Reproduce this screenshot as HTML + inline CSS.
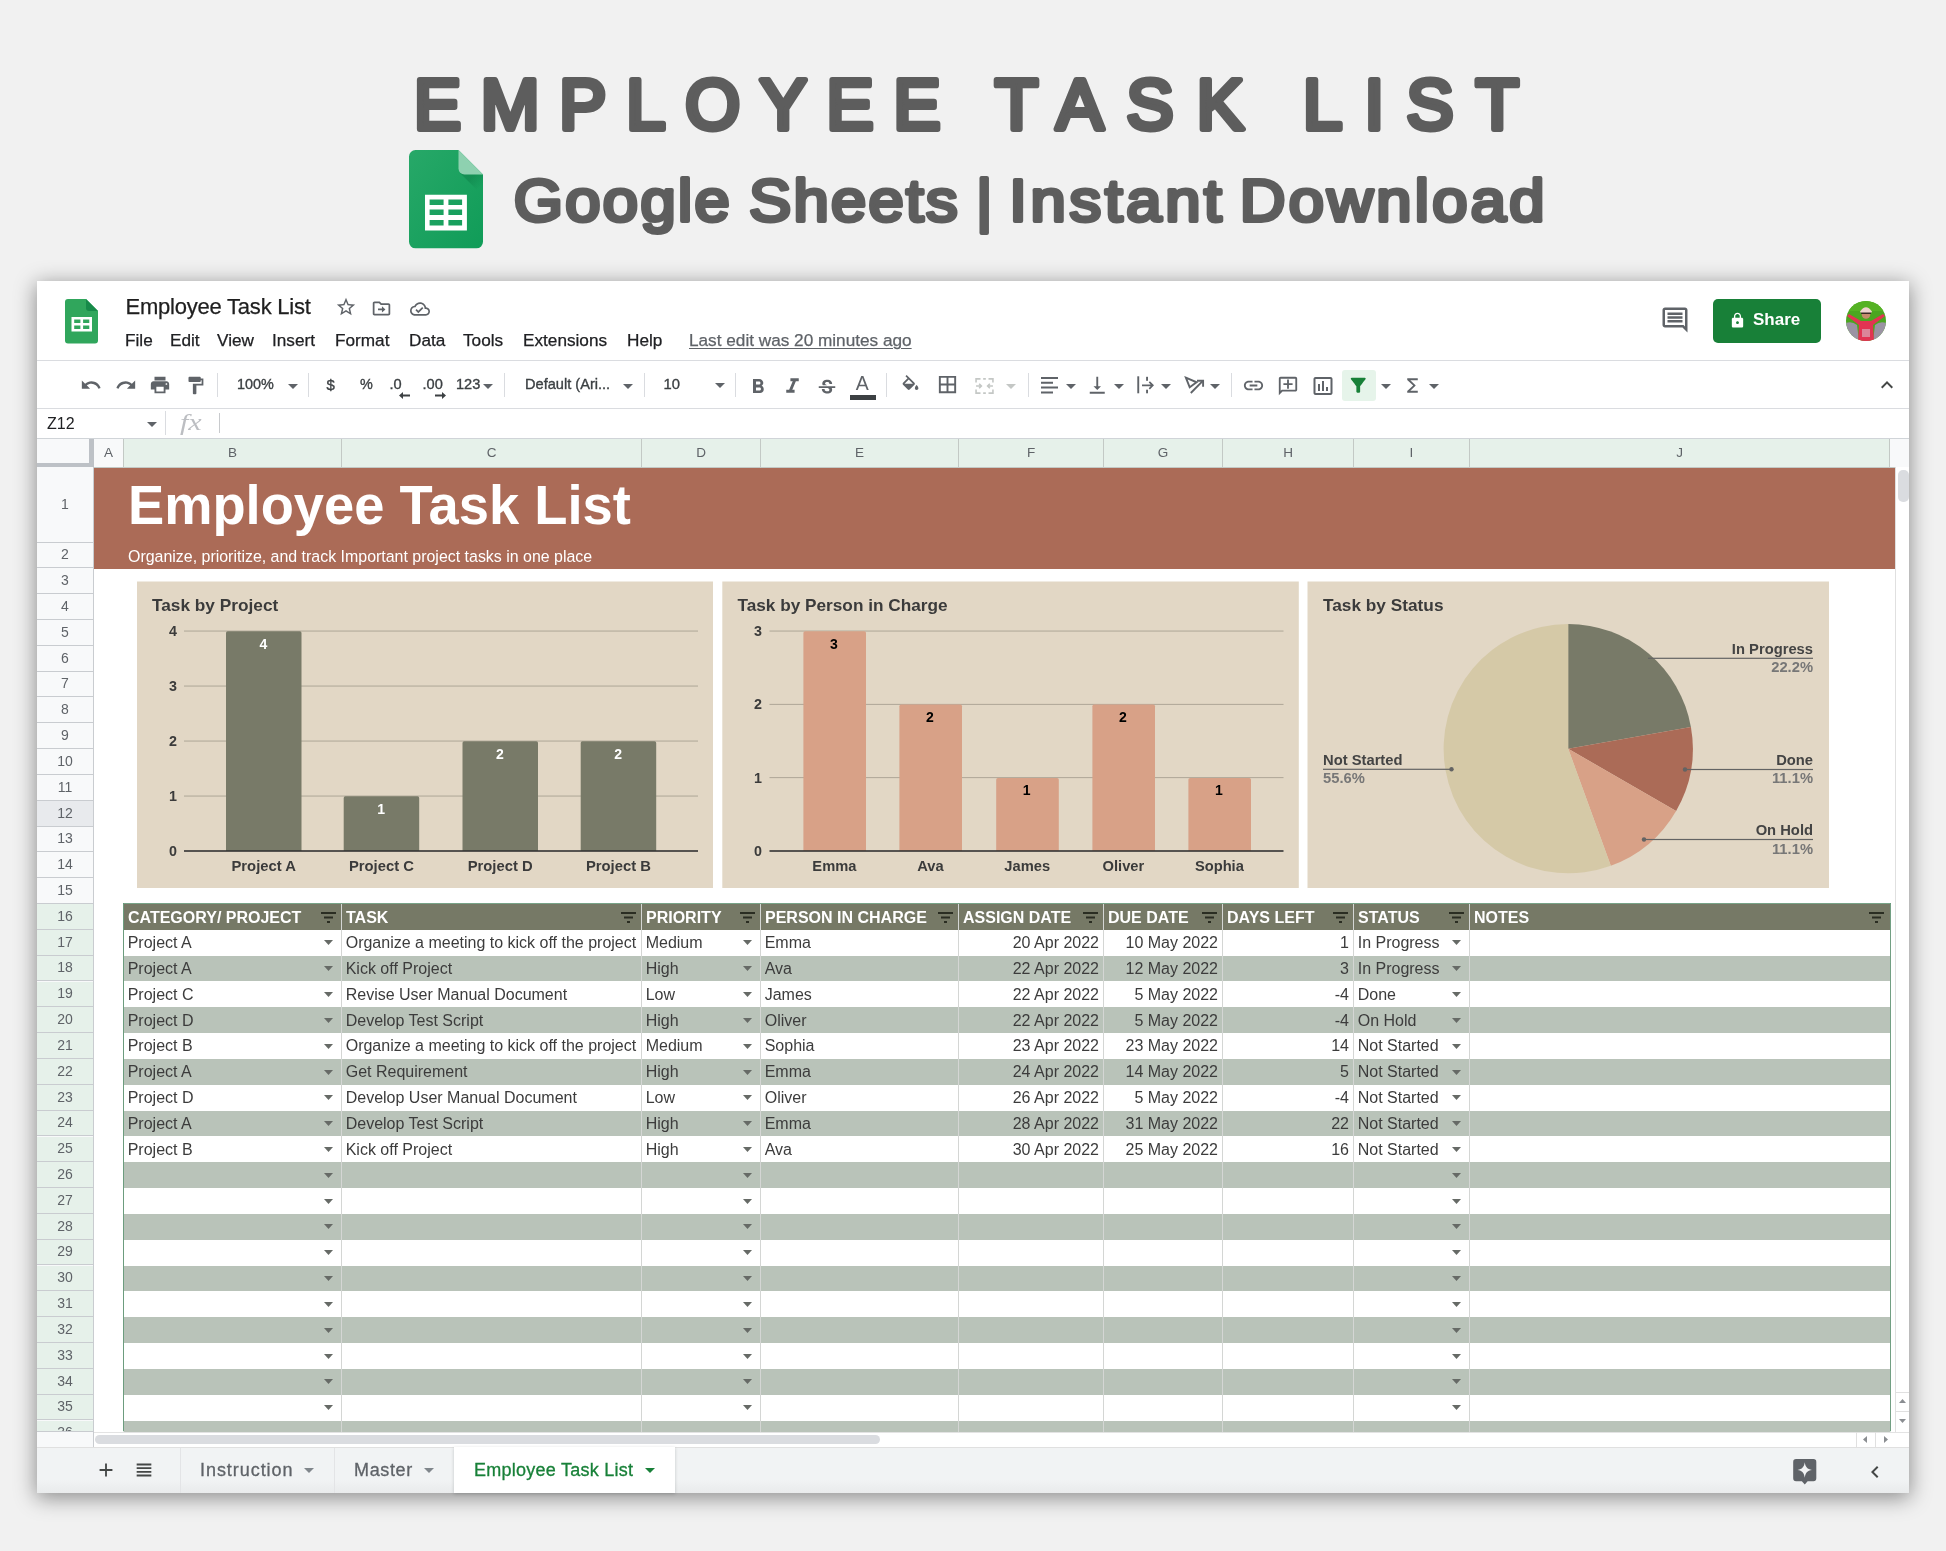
<!DOCTYPE html><html lang="en"><head><meta charset="utf-8"><title>Employee Task List</title><style>
*{box-sizing:border-box;margin:0;padding:0}
html,body{width:1946px;height:1551px;overflow:hidden}
body{will-change:transform;background:#f1f1f1;font-family:"Liberation Sans",sans-serif;position:relative;color:#202124}
.a{position:absolute;white-space:nowrap}
.t{position:absolute;white-space:nowrap;line-height:1}
svg{position:absolute;overflow:visible}
.rh{position:absolute;left:37px;width:56px;text-align:center;font-size:14px;color:#5f6368;background:#f8f9fa;border-bottom:1px solid #c9ccd0;line-height:1}
.ch{position:absolute;top:439px;height:29px;text-align:center;font-size:13.500px;color:#5f6368;background:#e6f1ea;border-right:1px solid #c3c9c5;line-height:28.500px}
.c{position:absolute;white-space:nowrap;font-size:16px;line-height:1;color:#3c3c3c}
.hd{position:absolute;white-space:nowrap;font-size:16px;font-weight:bold;line-height:1;color:#fff}
.m{position:absolute;white-space:nowrap;font-size:17.2px;line-height:1;color:#202124;top:332.300px;-webkit-text-stroke-width:0.25px}
</style></head><body>
<svg style="left:0;top:0" width="1946" height="281" viewBox="0 0 1946 281"><g font-family="Liberation Sans, sans-serif" font-weight="normal" fill="#5d5d5d" stroke="#5d5d5d" stroke-linejoin="round" stroke-linecap="round"><text id="bigtitle" y="128.7" font-size="70.5" stroke-width="5.8"><tspan x="414" style="letter-spacing:19.79px">EMPLOYEE</tspan> <tspan x="995" style="letter-spacing:23.33px">TASK</tspan> <tspan x="1303" style="letter-spacing:22.33px">LIST</tspan></text><g transform="translate(0,221.3) scale(1.08,1)"><text id="subtitle" y="0" font-size="58.6" stroke-width="4"><tspan x="475.65" style="letter-spacing:2.2px">Google</tspan> <tspan x="693.52" style="letter-spacing:2.17px">Sheets</tspan> <tspan x="903.7">|</tspan> <tspan x="934.54" style="letter-spacing:3.47px">Instant</tspan> <tspan x="1147.87" style="letter-spacing:3.08px">Download</tspan></text></g></g></svg>
<svg style="left:409px;top:150.400px" width="74" height="98.300" viewBox="0 0 74 98.300">
<defs><linearGradient id="gsg" x1="0" y1="0" x2="1" y2="1"><stop offset="0" stop-color="#27a868"/><stop offset="1" stop-color="#109c58"/></linearGradient>
<linearGradient id="gsf" x1="0.350" y1="0.350" x2="0.750" y2="0.750"><stop offset="0" stop-color="#0c7a45" stop-opacity=".45"/><stop offset="1" stop-color="#0c7a45" stop-opacity="0"/></linearGradient></defs>
<path d="M6.500 0H49.500L74 24.500V91.800a6.500 6.500 0 0 1-6.500 6.500H6.500a6.500 6.500 0 0 1-6.500-6.500V6.500a6.500 6.500 0 0 1 6.500-6.500z" fill="url(#gsg)"/>
<path d="M51 23L74 46V24.500z" fill="url(#gsf)"/>
<path d="M49.500 0L74 24.500H55.500a6 6 0 0 1-6-6z" fill="#8ed1b0"/>
<path d="M16 44.700H57.900V80.500H16zM20.600 49.500V55H34.600V49.500zM39.400 49.500V55H53.100V49.500zM20.600 59.600V64.900H34.600V59.600zM39.400 59.600V64.900H53.100V59.600zM20.600 70V75.400H34.600V70zM39.400 70V75.400H53.100V70z" fill="#fff" fill-rule="evenodd"/>
</svg>
<div class="a" id="win" style="left:37px;top:281px;width:1872px;height:1212px;background:#fff;box-shadow:0 4px 20px 1px rgba(0,0,0,.42)"></div>
<svg style="left:65px;top:298.5px" width="33" height="44.5" viewBox="0 0 33 44.5">
<path d="M3 0H21L33 12V41.5a3 3 0 0 1-3 3H3a3 3 0 0 1-3-3V3a3 3 0 0 1 3-3z" fill="#30a65c"/>
<path d="M21 0L33 12H24a3 3 0 0 1-3-3z" fill="#178a49"/>
<path d="M6.500 18H27V32.500H6.500zM9.200 20.600V23.900H15.400V20.600zM18.100 20.600V23.900H24.300V20.600zM9.200 26.500V29.900H15.400V26.500zM18.100 26.500V29.900H24.300V26.500z" fill="#fff" fill-rule="evenodd"/>
</svg>
<div class="t" style="left:125.500px;top:296.400px;font-size:22px;letter-spacing:-0.22px;color:#1f1f1f;-webkit-text-stroke:0.25px #1f1f1f">Employee Task List</div>
<svg style="left:334.5px;top:296px" width="22" height="22" viewBox="0 0 24 24"><path d="M22 9.24l-7.19-.62L12 2 9.19 8.63 2 9.24l5.46 4.73L5.82 21 12 17.27 18.18 21l-1.63-7.03L22 9.24zM12 15.4l-3.76 2.27 1-4.28-3.32-2.88 4.38-.38L12 6.1l1.71 4.04 4.38.38-3.32 2.88 1 4.28L12 15.4z" fill="#5f6368" /></svg>
<svg style="left:371px;top:297.5px" width="21" height="21" viewBox="0 0 24 24"><path d="M20 6h-8l-2-2H4c-1.1 0-1.99.9-1.99 2L2 18c0 1.1.9 2 2 2h16c1.1 0 2-.9 2-2V8c0-1.1-.9-2-2-2zm0 12H4V6h5.17l2 2H20v10zm-7.5-1.5l4-3.5-4-3.5V12H8v2h4.5v2.5z" fill="#5f6368" /></svg>
<svg style="left:410px;top:298.5px" width="20" height="20" viewBox="0 0 24 24"><path d="M19.35 10.04C18.67 6.59 15.64 4 12 4 9.11 4 6.6 5.64 5.35 8.04 2.34 8.36 0 10.91 0 14c0 3.31 2.69 6 6 6h13c2.76 0 5-2.24 5-5 0-2.64-2.05-4.78-4.65-4.96zM19 18H6c-2.21 0-4-1.79-4-4s1.79-4 4-4h.71C7.37 7.69 9.48 6 12 6c3.04 0 5.5 2.46 5.5 5.5v.5H19c1.66 0 3 1.34 3 3s-1.34 3-3 3zm-9-3.82l-2.09-2.09L6.5 13.5 10 17l6.01-6.01-1.41-1.41z" fill="#5f6368" /></svg>
<div class="m" style="left:125px">File</div>
<div class="m" style="left:170px">Edit</div>
<div class="m" style="left:217px">View</div>
<div class="m" style="left:272px">Insert</div>
<div class="m" style="left:335px">Format</div>
<div class="m" style="left:409px">Data</div>
<div class="m" style="left:463px">Tools</div>
<div class="m" style="left:523px">Extensions</div>
<div class="m" style="left:627px">Help</div>
<div class="m" style="left:689px;color:#5f6368;text-decoration:underline;text-decoration-thickness:1px;text-underline-offset:2px">Last edit was 20 minutes ago</div>
<svg style="left:1660px;top:305px" width="30" height="30" viewBox="0 0 24 24"><path d="M21.99 4c0-1.1-.89-2-1.99-2H4c-1.1 0-2 .9-2 2v12c0 1.1.9 2 2 2h14l4 4-.01-18zM20 4v13.17L18.83 16H4V4h16zM6 12h12v2H6zm0-3h12v2H6zm0-3h12v2H6z" fill="#5f6368" /></svg>
<div class="a" style="left:1713px;top:299px;width:108px;height:43.5px;background:#188038;border-radius:5px"></div>
<svg style="left:1728.5px;top:311.5px" width="17" height="17" viewBox="0 0 24 24"><path d="M18 8h-1V6c0-2.76-2.24-5-5-5S7 3.24 7 6v2H6c-1.1 0-2 .9-2 2v10c0 1.1.9 2 2 2h12c1.1 0 2-.9 2-2V10c0-1.1-.9-2-2-2zm-6 9c-1.1 0-2-.9-2-2s.9-2 2-2 2 .9 2 2-.9 2-2 2zm3.1-9H8.9V6c0-1.71 1.39-3.1 3.1-3.1 1.71 0 3.1 1.39 3.1 3.1v2z" fill="#fff" /></svg>
<div class="t" style="left:1753px;top:311.200px;font-size:17px;font-weight:bold;color:#fff">Share</div>
<svg style="left:1846px;top:301px" width="40" height="40" viewBox="0 0 40 40">
<defs><clipPath id="av"><circle cx="20" cy="20" r="20"/></clipPath></defs>
<g clip-path="url(#av)"><rect width="40" height="40" fill="#4aa620"/>
<rect y="0" width="40" height="10" fill="#55b224"/>
<path d="M0 22Q6 20 11 24L13 40H0zM40 22Q34 20 29 24L27 40H40z" fill="#9b93a3"/>
<path d="M1 15L3 13L15 20H25L37 13L39 15L27 24L28 40H12L13 24z" fill="#e23452"/>
<path d="M16 28H24V36H16z" fill="#d9a9b8" opacity=".7"/>
<circle cx="20" cy="13.500" r="4.300" fill="#c58b6c"/><path d="M15 13Q15 8 20 8Q25 8 25 13z" fill="#3a2a26"/><path d="M14 10.500Q20 2 26 10.500L25.500 11.500H14.500z" fill="#efd3cf"/>
</g></svg>
<div class="a" style="left:37px;top:360px;width:1872px;height:1px;background:#dadce0"></div>
<svg style="left:79.5px;top:374.0px" width="22" height="22" viewBox="0 0 24 24"><path d="M12.5 8c-2.65 0-5.05.99-6.9 2.6L2 7v9h9l-3.62-3.62c1.39-1.16 3.16-1.88 5.12-1.88 3.54 0 6.55 2.31 7.6 5.5l2.37-.78C21.08 11.03 17.15 8 12.5 8z" fill="#5f6368" /></svg>
<svg style="left:114.5px;top:374.0px" width="22" height="22" viewBox="0 0 24 24"><path d="M18.4 10.6C16.55 8.99 14.15 8 11.5 8c-4.65 0-8.58 3.03-9.96 7.22L3.9 16c1.05-3.19 4.05-5.5 7.6-5.5 1.95 0 3.73.72 5.12 1.88L13 16h9V7l-3.6 3.6z" fill="#5f6368" /></svg>
<svg style="left:149.0px;top:374.0px" width="22" height="22" viewBox="0 0 24 24"><path d="M19 8H5c-1.66 0-3 1.34-3 3v6h4v4h12v-4h4v-6c0-1.66-1.34-3-3-3zm-3 11H8v-5h8v5zm3-7c-.55 0-1-.45-1-1s.45-1 1-1 1 .45 1 1-.45 1-1 1zm-1-9H6v4h12V3z" fill="#5f6368" /></svg>
<svg style="left:184.5px;top:375.0px" width="21" height="21" viewBox="0 0 24 24"><path d="M18 4V3c0-.55-.45-1-1-1H5c-.55 0-1 .45-1 1v4c0 .55.45 1 1 1h12c.55 0 1-.45 1-1V6h1v4H9v11c0 .55.45 1 1 1h2c.55 0 1-.45 1-1v-9h8V4h-3z" fill="#5f6368" /></svg>
<div class="a" style="left:217px;top:373px;width:1px;height:24px;background:#dadce0"></div>
<div class="t" style="left:237px;top:377.148px;font-size:14.4px;color:#3c4043;font-weight:normal;-webkit-text-stroke:0.35px #3c4043">100%</div>
<svg style="left:288.0px;top:383.5px" width="10" height="5" viewBox="0 0 10 5"><path d="M0 0H10L5 5z" fill="#5f6368"/></svg>
<div class="a" style="left:308px;top:373px;width:1px;height:24px;background:#dadce0"></div>
<div class="t" style="left:326.5px;top:376.8px;font-size:15px;color:#3c4043;font-weight:normal;-webkit-text-stroke:0.35px #3c4043">$</div>
<div class="t" style="left:360px;top:377.148px;font-size:14.4px;color:#3c4043;font-weight:normal;-webkit-text-stroke:0.35px #3c4043">%</div>
<div class="t" style="left:389.5px;top:377.032px;font-size:14.6px;color:#3c4043;font-weight:normal;-webkit-text-stroke:0.35px #3c4043">.0</div>
<div class="t" style="left:422.5px;top:377.032px;font-size:14.6px;color:#3c4043;font-weight:normal;-webkit-text-stroke:0.35px #3c4043">.00</div>
<div class="t" style="left:456px;top:377.032px;font-size:14.6px;color:#3c4043;font-weight:normal;-webkit-text-stroke:0.35px #3c4043">123</div>
<svg style="left:483.0px;top:383.5px" width="10" height="5" viewBox="0 0 10 5"><path d="M0 0H10L5 5z" fill="#5f6368"/></svg>
<svg style="left:398.500px;top:392px" width="11" height="7" viewBox="0 0 11 7"><path d="M11 2.600H4V0L0 3.500 4 7V4.400H11z" fill="#3c4043"/></svg>
<svg style="left:435px;top:392px" width="11" height="7" viewBox="0 0 11 7"><path d="M0 2.600H7V0L11 3.500 7 7V4.400H0z" fill="#3c4043"/></svg>
<div class="a" style="left:504px;top:373px;width:1px;height:24px;background:#dadce0"></div>
<div class="t" style="left:525px;top:377.032px;font-size:14.6px;color:#3c4043;font-weight:normal;-webkit-text-stroke:0.35px #3c4043">Default (Ari...</div>
<svg style="left:623.0px;top:383.5px" width="10" height="5" viewBox="0 0 10 5"><path d="M0 0H10L5 5z" fill="#5f6368"/></svg>
<div class="a" style="left:644px;top:373px;width:1px;height:24px;background:#dadce0"></div>
<div class="t" style="left:663.5px;top:376.916px;font-size:14.8px;color:#3c4043;font-weight:normal;-webkit-text-stroke:0.35px #3c4043">10</div>
<svg style="left:715.0px;top:383.0px" width="10" height="5" viewBox="0 0 10 5"><path d="M0 0H10L5 5z" fill="#5f6368"/></svg>
<div class="a" style="left:735px;top:373px;width:1px;height:24px;background:#dadce0"></div>
<svg style="left:745.5px;top:374.8px" width="24" height="24" viewBox="0 0 24 24"><path d="M15.6 10.79c.97-.67 1.65-1.77 1.65-2.79 0-2.26-1.75-4-4-4H7v14h7.04c2.09 0 3.71-1.7 3.71-3.79 0-1.52-.86-2.82-2.15-3.42zM10 6.5h3c.83 0 1.5.67 1.5 1.5s-.67 1.5-1.5 1.5h-3v-3zm3.500 9H10v-3h3.500c.83 0 1.500.67 1.500 1.500s-.67 1.500-1.500 1.500z" fill="#5f6368" /></svg>
<svg style="left:780.0px;top:374.0px" width="25" height="25" viewBox="0 0 24 24"><path d="M10 4v3h2.21l-3.42 8H6v3h8v-3h-2.21l3.42-8H18V4z" fill="#5f6368" /></svg>
<svg style="left:816.0px;top:376.5px" width="22" height="22" viewBox="0 0 24 24"><path d="M7.24 8.75c-.26-.48-.39-1.03-.39-1.67 0-.61.13-1.16.4-1.67.26-.5.63-.93 1.11-1.29.48-.35 1.05-.63 1.7-.83.66-.19 1.39-.29 2.18-.29.81 0 1.54.11 2.21.34.66.22 1.23.54 1.69.94.47.4.83.88 1.08 1.43.25.55.38 1.15.38 1.81h-3.010c0-.31-.05-.59-.15-.85-.09-.27-.24-.49-.44-.68-.2-.19-.45-.33-.75-.44-.3-.1-.66-.16-1.060-.16-.39 0-.74.04-1.030.13-.29.09-.53.21-.72.36-.19.16-.34.34-.44.55-.1.21-.15.43-.15.66 0 .48.25.88.74 1.210.38.25.77.48 1.410.7H7.390c-.05-.08-.11-.17-.15-.25zM21 12v-2H3v2h9.620c.18.07.4.14.55.2.37.17.66.34.87.51.21.17.35.36.43.57.07.2.11.43.11.69 0 .23-.05.45-.14.66-.09.2-.23.38-.42.53-.19.15-.42.26-.71.35-.29.08-.63.13-1.010.13-.43 0-.83-.04-1.180-.13s-.66-.23-.91-.42c-.25-.19-.45-.44-.59-.75-.14-.31-.25-.76-.25-1.210H6.400c0 .55.08 1.130.24 1.580.16.45.37.85.65 1.210.28.35.6.66.98.92.37.26.78.48 1.220.65.44.17.9.3 1.380.39.48.08.96.13 1.440.13.8 0 1.530-.09 2.180-.28s1.210-.45 1.670-.79c.46-.34.82-.77 1.070-1.270s.38-1.070.38-1.710c0-.6-.1-1.140-.31-1.610-.05-.11-.11-.23-.17-.33H21z" fill="#5f6368" /></svg>
<div class="t" style="left:855.7px;top:373.5px;font-size:19.5px;color:#5f6368;font-weight:normal;-webkit-text-stroke:0px #5f6368">A</div>
<div class="a" style="left:850px;top:395px;width:26px;height:4.500px;background:#3c4043"></div>
<div class="a" style="left:886px;top:373px;width:1px;height:24px;background:#dadce0"></div>
<svg style="left:900.0px;top:374.7px" width="21" height="21" viewBox="0 0 24 24"><path d="M16.56 8.94L7.62 0 6.21 1.41l2.38 2.38-5.15 5.15c-.59.59-.59 1.54 0 2.12l5.5 5.5c.29.29.68.44 1.06.44s.77-.15 1.06-.44l5.5-5.5c.59-.58.59-1.53 0-2.12zM5.21 10L10 5.21 14.79 10H5.21zM19 11.5s-2 2.170-2 3.500c0 1.100.9 2 2 2s2-.9 2-2c0-1.330-2-3.500-2-3.500z" fill="#5f6368" /></svg>
<svg style="left:935.8px;top:373.2px" width="23" height="23" viewBox="0 0 24 24"><path d="M3 3v18h18V3H3zm8 16H5v-6h6v6zm0-8H5V5h6v6zm8 8h-6v-6h6v6zm0-8h-6V5h6v6z" fill="#5f6368" /></svg>
<svg style="left:975px;top:378px" width="19" height="16" viewBox="0 0 21 18"><g fill="none" stroke="#c4c7c5" stroke-width="1.800"><path d="M1 5V1H6M9 1H12M15 1H20V5M1 13V17H6M9 17H12M15 17H20V13"/><path d="M1 9H7M4.500 6.500L7 9 4.500 11.500M20 9H14M16.500 6.500L14 9 16.500 11.500"/></g></svg>
<svg style="left:1006.0px;top:383.5px" width="10" height="5" viewBox="0 0 10 5"><path d="M0 0H10L5 5z" fill="#c4c7c5"/></svg>
<div class="a" style="left:1028px;top:373px;width:1px;height:24px;background:#dadce0"></div>
<svg style="left:1041.300px;top:377px" width="17" height="17" viewBox="0 0 17 17"><path d="M0 0H17V2H0zM0 4.800H12V6.800H0zM0 9.600H17V11.600H0zM0 14.500H12V16.500H0z" fill="#5f6368"/></svg>
<svg style="left:1065.5px;top:383.5px" width="10" height="5" viewBox="0 0 10 5"><path d="M0 0H10L5 5z" fill="#5f6368"/></svg>
<svg style="left:1086.25px;top:373.75px" width="22.5" height="22.5" viewBox="0 0 24 24"><path d="M16 13h-3V3h-2v10H8l4 4 4-4zM4 19v2h16v-2H4z" fill="#5f6368" /></svg>
<svg style="left:1113.5px;top:383.5px" width="10" height="5" viewBox="0 0 10 5"><path d="M0 0H10L5 5z" fill="#5f6368"/></svg>
<svg style="left:1137px;top:376px" width="20" height="18" viewBox="0 0 20 18"><g fill="#5f6368"><rect x="0.300" y="0.300" width="1.900" height="17"/><rect x="9.100" y="0.800" width="1.900" height="4"/><rect x="9.100" y="13.700" width="1.900" height="3.600"/></g><path d="M5 9.300H15.500M12.300 5.800L15.800 9.300 12.300 12.800" fill="none" stroke="#5f6368" stroke-width="1.700"/></svg>
<svg style="left:1161.0px;top:383.5px" width="10" height="5" viewBox="0 0 10 5"><path d="M0 0H10L5 5z" fill="#5f6368"/></svg>
<svg style="left:1184px;top:375px" width="22" height="20" viewBox="0 0 22 20"><g fill="none" stroke="#5f6368" stroke-width="1.900"><path d="M1.900 2.700L12.600 7.300 5.700 12.300z"/><path d="M6.800 18L18.600 6.200"/><path d="M13 5.700H19.100V11.800"/></g></svg>
<svg style="left:1209.5px;top:383.5px" width="10" height="5" viewBox="0 0 10 5"><path d="M0 0H10L5 5z" fill="#5f6368"/></svg>
<div class="a" style="left:1231px;top:373px;width:1px;height:24px;background:#dadce0"></div>
<svg style="left:1242.0px;top:374.0px" width="23" height="23" viewBox="0 0 24 24"><path d="M3.9 12c0-1.710 1.390-3.100 3.100-3.100h4V7H7c-2.760 0-5 2.240-5 5s2.240 5 5 5h4v-1.900H7c-1.710 0-3.100-1.390-3.100-3.100zM8 13h8v-2H8v2zm9-6h-4v1.900h4c1.710 0 3.100 1.390 3.100 3.100s-1.390 3.100-3.100 3.100h-4V17h4c2.760 0 5-2.240 5-5s-2.240-5-5-5z" fill="#5f6368" /></svg>
<svg style="left:1277px;top:374.5px" width="22" height="22" viewBox="0 0 24 24"><path d="M22 4c0-1.100-.9-2-2-2H4c-1.100 0-2 .9-2 2v12c0 1.100.9 2 2 2h14l4 4V4zm-2 13.170L18.830 16H4V4h16v13.170zM13 5h-2v4H7v2h4v4h2v-4h4V9h-4z" fill="#5f6368" transform="translate(24,0) scale(-1,1)"/></svg>
<svg style="left:1310.5px;top:373.5px" width="24" height="24" viewBox="0 0 24 24"><path d="M9 17H7v-7h2v7zm4 0h-2V7h2v10zm4 0h-2v-4h2v4zm2.500 2.100h-15V5h15v14.100zm0-16.100h-15c-1.100 0-2 .9-2 2v14c0 1.100.9 2 2 2h15c1.100 0 2-.9 2-2V5c0-1.100-.9-2-2-2z" fill="#5f6368" /></svg>
<div class="a" style="left:1341.500px;top:370px;width:34px;height:31px;background:#e6f4ea;border-radius:3px"></div>
<svg style="left:1347.25px;top:374.25px" width="22.5" height="22.5" viewBox="0 0 24 24"><path d="M4.250 5.610C6.270 8.200 10 13 10 13v6c0 .55.45 1 1 1h2c.55 0 1-.45 1-1v-6s3.720-4.800 5.740-7.390c.51-.66.04-1.610-.79-1.610H5.040c-.83 0-1.300.95-.79 1.610z" fill="#188038" /></svg>
<svg style="left:1380.5px;top:383.5px" width="10" height="5" viewBox="0 0 10 5"><path d="M0 0H10L5 5z" fill="#5f6368"/></svg>
<svg style="left:1400.5px;top:374.0px" width="23" height="23" viewBox="0 0 24 24"><path d="M17.500 4.500H6.500v1.800l6.200 5.700-6.200 5.700v1.800h11v-2.100H9.700l5.700-5.400-5.700-5.400h7.800z" fill="#5f6368" /></svg>
<svg style="left:1428.5px;top:383.5px" width="10" height="5" viewBox="0 0 10 5"><path d="M0 0H10L5 5z" fill="#5f6368"/></svg>
<svg style="left:1875.0px;top:373.0px" width="24" height="24" viewBox="0 0 24 24"><path d="M12 8l-6 6 1.410 1.410L12 10.830l4.590 4.580L18 14z" fill="#444746" /></svg>
<div class="a" style="left:37px;top:408px;width:1872px;height:1px;background:#dadce0"></div>
<div class="t" style="left:47px;top:415.500px;font-size:16px;color:#202124">Z12</div>
<svg style="left:146.5px;top:422.0px" width="10" height="5" viewBox="0 0 10 5"><path d="M0 0H10L5 5z" fill="#5f6368"/></svg>
<div class="a" style="left:165px;top:411px;width:1px;height:24px;background:#dadce0"></div>
<div class="t" style="left:180px;top:410.500px;font-size:23.500px;font-style:italic;font-family:'Liberation Serif',serif;color:#bcbec2;transform:scaleX(1.28);transform-origin:0 0">fx</div>
<div class="a" style="left:218.500px;top:413px;width:1px;height:20px;background:#c8cacd"></div>
<div class="a" style="left:37px;top:439px;width:57px;height:29px;background:#f8f9fa;border-right:5px solid #bdc1c6;border-bottom:5px solid #bdc1c6"></div>
<div class="ch" style="left:94px;width:30px;background:#f8f9fa">A</div>
<div class="ch" style="left:124px;width:218px;background:#e6f1ea">B</div>
<div class="ch" style="left:342px;width:300px;background:#e6f1ea">C</div>
<div class="ch" style="left:642px;width:119px;background:#e6f1ea">D</div>
<div class="ch" style="left:761px;width:198px;background:#e6f1ea">E</div>
<div class="ch" style="left:959px;width:145px;background:#e6f1ea">F</div>
<div class="ch" style="left:1104px;width:119px;background:#e6f1ea">G</div>
<div class="ch" style="left:1223px;width:131px;background:#e6f1ea">H</div>
<div class="ch" style="left:1354px;width:116px;background:#e6f1ea">I</div>
<div class="ch" style="left:1470px;width:420px;background:#e6f1ea">J</div>
<div class="a" style="left:1890px;top:439px;width:19px;height:28px;background:#f8f9fa"></div>
<div class="a" style="left:37px;top:438px;width:1872px;height:1px;background:#d0d4d8"></div>
<div class="a" style="left:94px;top:467px;width:1801px;height:1px;background:#c3c9c5"></div>
<div class="a" style="left:37px;top:467px;width:57px;height:965px;background:#f8f9fa;border-right:1px solid #c9ccd0"></div>
<div class="rh" style="top:467.0px;height:75.6px;background:#f8f9fa;overflow:hidden"><span style="position:absolute;left:0;width:56px;top:29.7px">1</span></div>
<div class="rh" style="top:542.6px;height:25.8px;background:#f8f9fa;overflow:hidden"><span style="position:absolute;left:0;width:56px;top:4.8px">2</span></div>
<div class="rh" style="top:568.4px;height:25.8px;background:#f8f9fa;overflow:hidden"><span style="position:absolute;left:0;width:56px;top:4.8px">3</span></div>
<div class="rh" style="top:594.2px;height:25.8px;background:#f8f9fa;overflow:hidden"><span style="position:absolute;left:0;width:56px;top:4.8px">4</span></div>
<div class="rh" style="top:620.1px;height:25.8px;background:#f8f9fa;overflow:hidden"><span style="position:absolute;left:0;width:56px;top:4.8px">5</span></div>
<div class="rh" style="top:645.9px;height:25.8px;background:#f8f9fa;overflow:hidden"><span style="position:absolute;left:0;width:56px;top:4.8px">6</span></div>
<div class="rh" style="top:671.7px;height:25.8px;background:#f8f9fa;overflow:hidden"><span style="position:absolute;left:0;width:56px;top:4.8px">7</span></div>
<div class="rh" style="top:697.5px;height:25.8px;background:#f8f9fa;overflow:hidden"><span style="position:absolute;left:0;width:56px;top:4.8px">8</span></div>
<div class="rh" style="top:723.3px;height:25.8px;background:#f8f9fa;overflow:hidden"><span style="position:absolute;left:0;width:56px;top:4.8px">9</span></div>
<div class="rh" style="top:749.2px;height:25.8px;background:#f8f9fa;overflow:hidden"><span style="position:absolute;left:0;width:56px;top:4.8px">10</span></div>
<div class="rh" style="top:775.0px;height:25.8px;background:#f8f9fa;overflow:hidden"><span style="position:absolute;left:0;width:56px;top:4.8px">11</span></div>
<div class="rh" style="top:800.8px;height:25.8px;background:#e8eaed;overflow:hidden"><span style="position:absolute;left:0;width:56px;top:4.8px">12</span></div>
<div class="rh" style="top:826.6px;height:25.8px;background:#f8f9fa;overflow:hidden"><span style="position:absolute;left:0;width:56px;top:4.8px">13</span></div>
<div class="rh" style="top:852.4px;height:25.8px;background:#f8f9fa;overflow:hidden"><span style="position:absolute;left:0;width:56px;top:4.8px">14</span></div>
<div class="rh" style="top:878.3px;height:25.8px;background:#f8f9fa;overflow:hidden"><span style="position:absolute;left:0;width:56px;top:4.8px">15</span></div>
<div class="rh" style="top:904.1px;height:25.8px;background:#e6f1ea;overflow:hidden"><span style="position:absolute;left:0;width:56px;top:4.8px">16</span></div>
<div class="rh" style="top:929.9px;height:25.8px;background:#e6f1ea;overflow:hidden"><span style="position:absolute;left:0;width:56px;top:4.8px">17</span></div>
<div class="rh" style="top:955.7px;height:25.8px;background:#e6f1ea;overflow:hidden"><span style="position:absolute;left:0;width:56px;top:4.8px">18</span></div>
<div class="rh" style="top:981.5px;height:25.8px;background:#e6f1ea;overflow:hidden"><span style="position:absolute;left:0;width:56px;top:4.8px">19</span></div>
<div class="rh" style="top:1007.4px;height:25.8px;background:#e6f1ea;overflow:hidden"><span style="position:absolute;left:0;width:56px;top:4.8px">20</span></div>
<div class="rh" style="top:1033.2px;height:25.8px;background:#e6f1ea;overflow:hidden"><span style="position:absolute;left:0;width:56px;top:4.8px">21</span></div>
<div class="rh" style="top:1059.0px;height:25.8px;background:#e6f1ea;overflow:hidden"><span style="position:absolute;left:0;width:56px;top:4.8px">22</span></div>
<div class="rh" style="top:1084.8px;height:25.8px;background:#e6f1ea;overflow:hidden"><span style="position:absolute;left:0;width:56px;top:4.8px">23</span></div>
<div class="rh" style="top:1110.6px;height:25.8px;background:#e6f1ea;overflow:hidden"><span style="position:absolute;left:0;width:56px;top:4.8px">24</span></div>
<div class="rh" style="top:1136.5px;height:25.8px;background:#e6f1ea;overflow:hidden"><span style="position:absolute;left:0;width:56px;top:4.8px">25</span></div>
<div class="rh" style="top:1162.3px;height:25.8px;background:#e6f1ea;overflow:hidden"><span style="position:absolute;left:0;width:56px;top:4.8px">26</span></div>
<div class="rh" style="top:1188.1px;height:25.8px;background:#e6f1ea;overflow:hidden"><span style="position:absolute;left:0;width:56px;top:4.8px">27</span></div>
<div class="rh" style="top:1213.9px;height:25.8px;background:#e6f1ea;overflow:hidden"><span style="position:absolute;left:0;width:56px;top:4.8px">28</span></div>
<div class="rh" style="top:1239.7px;height:25.8px;background:#e6f1ea;overflow:hidden"><span style="position:absolute;left:0;width:56px;top:4.8px">29</span></div>
<div class="rh" style="top:1265.6px;height:25.8px;background:#e6f1ea;overflow:hidden"><span style="position:absolute;left:0;width:56px;top:4.8px">30</span></div>
<div class="rh" style="top:1291.4px;height:25.8px;background:#e6f1ea;overflow:hidden"><span style="position:absolute;left:0;width:56px;top:4.8px">31</span></div>
<div class="rh" style="top:1317.2px;height:25.8px;background:#e6f1ea;overflow:hidden"><span style="position:absolute;left:0;width:56px;top:4.8px">32</span></div>
<div class="rh" style="top:1343.0px;height:25.8px;background:#e6f1ea;overflow:hidden"><span style="position:absolute;left:0;width:56px;top:4.8px">33</span></div>
<div class="rh" style="top:1368.8px;height:25.8px;background:#e6f1ea;overflow:hidden"><span style="position:absolute;left:0;width:56px;top:4.8px">34</span></div>
<div class="rh" style="top:1394.7px;height:25.8px;background:#e6f1ea;overflow:hidden"><span style="position:absolute;left:0;width:56px;top:4.8px">35</span></div>
<div class="rh" style="top:1420.5px;height:11.5px;background:#e6f1ea;overflow:hidden"><span style="position:absolute;left:0;width:56px;top:4.8px">36</span></div>
<div class="a" style="left:94px;top:467.800px;width:1801px;height:100.800px;background:#ab6b57"></div>
<div class="t" style="left:128px;top:477.300px;font-size:56.400px;font-weight:bold;color:#fff;transform:scaleX(.9625);transform-origin:0 0">Employee Task List</div>
<div class="t" style="left:128px;top:548.700px;font-size:15.950px;color:#fff">Organize, prioritize, and track Important project tasks in one place</div>
<div class="a" style="left:1895px;top:467px;width:14px;height:965px;background:#fff;border-left:1px solid #e0e0e0"></div>
<div class="a" style="left:1898px;top:469.500px;width:10.500px;height:32px;background:#dadce0;border-radius:5px"></div>
<svg style="left:0;top:0" width="1946" height="1551" viewBox="0 0 1946 1551"><rect x="137" y="581.5" width="576" height="306.5" fill="#e2d7c5"/><text x="152" y="611" font-family="Liberation Sans, sans-serif" font-size="17.25" font-weight="bold" fill="#3b3b3b" text-anchor="start">Task by Project</text><rect x="184" y="630.6" width="514" height="0.9" fill="#a8a192"/><text x="177" y="636" font-family="Liberation Sans, sans-serif" font-size="14.3" font-weight="bold" fill="#3b3b3b" text-anchor="end">4</text><rect x="184" y="685.6" width="514" height="0.9" fill="#a8a192"/><text x="177" y="691" font-family="Liberation Sans, sans-serif" font-size="14.3" font-weight="bold" fill="#3b3b3b" text-anchor="end">3</text><rect x="184" y="740.6" width="514" height="0.9" fill="#a8a192"/><text x="177" y="746" font-family="Liberation Sans, sans-serif" font-size="14.3" font-weight="bold" fill="#3b3b3b" text-anchor="end">2</text><rect x="184" y="795.6" width="514" height="0.9" fill="#a8a192"/><text x="177" y="801" font-family="Liberation Sans, sans-serif" font-size="14.3" font-weight="bold" fill="#3b3b3b" text-anchor="end">1</text><text x="177" y="856" font-family="Liberation Sans, sans-serif" font-size="14.3" font-weight="bold" fill="#3b3b3b" text-anchor="end">0</text><path d="M226 851V633Q226 631.3 227.7 631.3H299.8Q301.5 631.3 301.5 633V851z" fill="#787a68"/><text x="263.5" y="648.8" font-family="Liberation Sans, sans-serif" font-size="14" font-weight="bold" fill="#fff" text-anchor="middle">4</text><text x="263.7" y="871" font-family="Liberation Sans, sans-serif" font-size="14.8" font-weight="bold" fill="#3b3b3b" text-anchor="middle">Project A</text><path d="M343.7 851V798Q343.7 796.3 345.4 796.3H417.5Q419.2 796.3 419.2 798V851z" fill="#787a68"/><text x="381.2" y="813.8" font-family="Liberation Sans, sans-serif" font-size="14" font-weight="bold" fill="#fff" text-anchor="middle">1</text><text x="381.4" y="871" font-family="Liberation Sans, sans-serif" font-size="14.8" font-weight="bold" fill="#3b3b3b" text-anchor="middle">Project C</text><path d="M462.5 851V743Q462.5 741.3 464.2 741.3H536.3Q538.0 741.3 538.0 743V851z" fill="#787a68"/><text x="500.0" y="758.8" font-family="Liberation Sans, sans-serif" font-size="14" font-weight="bold" fill="#fff" text-anchor="middle">2</text><text x="500.2" y="871" font-family="Liberation Sans, sans-serif" font-size="14.8" font-weight="bold" fill="#3b3b3b" text-anchor="middle">Project D</text><path d="M580.7 851V743Q580.7 741.3 582.4000000000001 741.3H654.5Q656.2 741.3 656.2 743V851z" fill="#787a68"/><text x="618.2" y="758.8" font-family="Liberation Sans, sans-serif" font-size="14" font-weight="bold" fill="#fff" text-anchor="middle">2</text><text x="618.4000000000001" y="871" font-family="Liberation Sans, sans-serif" font-size="14.8" font-weight="bold" fill="#3b3b3b" text-anchor="middle">Project B</text><rect x="184" y="850.2" width="514" height="1.6" fill="#333"/><rect x="722.3" y="581.5" width="576.5" height="306.5" fill="#e2d7c5"/><text x="737.5" y="611" font-family="Liberation Sans, sans-serif" font-size="17.22" font-weight="bold" fill="#3b3b3b" text-anchor="start">Task by Person in Charge</text><rect x="769.5" y="630.6" width="514" height="0.9" fill="#a8a192"/><text x="762" y="636.0" font-family="Liberation Sans, sans-serif" font-size="14.3" font-weight="bold" fill="#3b3b3b" text-anchor="end">3</text><rect x="769.5" y="703.9" width="514" height="0.9" fill="#a8a192"/><text x="762" y="709.3" font-family="Liberation Sans, sans-serif" font-size="14.3" font-weight="bold" fill="#3b3b3b" text-anchor="end">2</text><rect x="769.5" y="777.2" width="514" height="0.9" fill="#a8a192"/><text x="762" y="782.6" font-family="Liberation Sans, sans-serif" font-size="14.3" font-weight="bold" fill="#3b3b3b" text-anchor="end">1</text><text x="762" y="856" font-family="Liberation Sans, sans-serif" font-size="14.3" font-weight="bold" fill="#3b3b3b" text-anchor="end">0</text><path d="M803.4 851V633.0Q803.4 631.3 805.1 631.3H864.3Q866.0 631.3 866.0 633.0V851z" fill="#d8a187"/><text x="833.8" y="648.81" font-family="Liberation Sans, sans-serif" font-size="14" font-weight="bold" fill="#000" text-anchor="middle">3</text><text x="834.4" y="871" font-family="Liberation Sans, sans-serif" font-size="14.7" font-weight="bold" fill="#3b3b3b" text-anchor="middle">Emma</text><path d="M899.4 851V706.3Q899.4 704.6 901.1 704.6H960.3Q962.0 704.6 962.0 706.3V851z" fill="#d8a187"/><text x="929.8" y="722.14" font-family="Liberation Sans, sans-serif" font-size="14" font-weight="bold" fill="#000" text-anchor="middle">2</text><text x="930.4" y="871" font-family="Liberation Sans, sans-serif" font-size="14.7" font-weight="bold" fill="#3b3b3b" text-anchor="middle">Ava</text><path d="M996.2 851V779.7Q996.2 778.0 997.9000000000001 778.0H1057.1Q1058.8 778.0 1058.8 779.7V851z" fill="#d8a187"/><text x="1026.6000000000001" y="795.4699999999999" font-family="Liberation Sans, sans-serif" font-size="14" font-weight="bold" fill="#000" text-anchor="middle">1</text><text x="1027.2" y="871" font-family="Liberation Sans, sans-serif" font-size="14.7" font-weight="bold" fill="#3b3b3b" text-anchor="middle">James</text><path d="M1092.4 851V706.3Q1092.4 704.6 1094.1000000000001 704.6H1153.3Q1155.0 704.6 1155.0 706.3V851z" fill="#d8a187"/><text x="1122.8000000000002" y="722.14" font-family="Liberation Sans, sans-serif" font-size="14" font-weight="bold" fill="#000" text-anchor="middle">2</text><text x="1123.4" y="871" font-family="Liberation Sans, sans-serif" font-size="14.7" font-weight="bold" fill="#3b3b3b" text-anchor="middle">Oliver</text><path d="M1188.4 851V779.7Q1188.4 778.0 1190.1000000000001 778.0H1249.3Q1251.0 778.0 1251.0 779.7V851z" fill="#d8a187"/><text x="1218.8000000000002" y="795.4699999999999" font-family="Liberation Sans, sans-serif" font-size="14" font-weight="bold" fill="#000" text-anchor="middle">1</text><text x="1219.4" y="871" font-family="Liberation Sans, sans-serif" font-size="14.7" font-weight="bold" fill="#3b3b3b" text-anchor="middle">Sophia</text><rect x="769.5" y="850.2" width="514" height="1.6" fill="#333"/><rect x="1307.5" y="581.5" width="521.5" height="306.5" fill="#e2d7c5"/><text x="1323" y="611" font-family="Liberation Sans, sans-serif" font-size="17.25" font-weight="bold" fill="#3b3b3b" text-anchor="start">Task by Status</text><path d="M1568.2 748.7L1568.20 624.10A124.6 124.6 0 0 1 1690.91 727.06Z" fill="#787a68"/><path d="M1568.2 748.7L1690.91 727.06A124.6 124.6 0 0 1 1676.11 811.00Z" fill="#ab6b57"/><path d="M1568.2 748.7L1676.11 811.00A124.6 124.6 0 0 1 1610.82 865.79Z" fill="#d8a187"/><path d="M1568.2 748.7L1610.82 865.79A124.6 124.6 0 1 1 1568.20 624.10Z" fill="#d5c9a7"/><text x="1813" y="653.5" font-family="Liberation Sans, sans-serif" font-size="14.75" font-weight="bold" fill="#444" text-anchor="end">In Progress</text><text x="1813" y="672.0" font-family="Liberation Sans, sans-serif" font-size="14.75" font-weight="bold" fill="#777" text-anchor="end">22.2%</text><rect x="1648" y="657.6999999999999" width="165" height="1.2" fill="#636363"/><text x="1813" y="764.5" font-family="Liberation Sans, sans-serif" font-size="14.75" font-weight="bold" fill="#444" text-anchor="end">Done</text><text x="1813" y="783.0" font-family="Liberation Sans, sans-serif" font-size="14.75" font-weight="bold" fill="#777" text-anchor="end">11.1%</text><rect x="1685" y="768.9" width="128" height="1.2" fill="#636363"/><circle cx="1685" cy="769.5" r="2.2" fill="#636363"/><text x="1813" y="835" font-family="Liberation Sans, sans-serif" font-size="14.75" font-weight="bold" fill="#444" text-anchor="end">On Hold</text><text x="1813" y="853.5" font-family="Liberation Sans, sans-serif" font-size="14.75" font-weight="bold" fill="#777" text-anchor="end">11.1%</text><rect x="1644" y="838.9" width="169" height="1.2" fill="#636363"/><circle cx="1644" cy="839.5" r="2.2" fill="#636363"/><text x="1323" y="764.5" font-family="Liberation Sans, sans-serif" font-size="14.75" font-weight="bold" fill="#444" text-anchor="start">Not Started</text><text x="1323" y="783.0" font-family="Liberation Sans, sans-serif" font-size="14.75" font-weight="bold" fill="#777" text-anchor="start">55.6%</text><rect x="1323" y="768.6999999999999" width="128.5" height="1.2" fill="#636363"/><circle cx="1451.5" cy="769.3" r="2.2" fill="#636363"/></svg>
<div class="a" style="left:124px;top:904.1px;width:1766px;height:25.82px;background:#767966"></div>
<div class="hd" style="left:128px;top:910.1px">CATEGORY/ PROJECT</div>
<svg style="left:321px;top:912.1px" width="15" height="11" viewBox="0 0 15 11"><path d="M0 0H15V2H0zM3 4.5H12V6.5H3zM6 9H9V11H6z" fill="#2a2d22"/></svg>
<div class="hd" style="left:346px;top:910.1px">TASK</div>
<svg style="left:621px;top:912.1px" width="15" height="11" viewBox="0 0 15 11"><path d="M0 0H15V2H0zM3 4.5H12V6.5H3zM6 9H9V11H6z" fill="#2a2d22"/></svg>
<div class="hd" style="left:646px;top:910.1px">PRIORITY</div>
<svg style="left:740px;top:912.1px" width="15" height="11" viewBox="0 0 15 11"><path d="M0 0H15V2H0zM3 4.5H12V6.5H3zM6 9H9V11H6z" fill="#2a2d22"/></svg>
<div class="hd" style="left:765px;top:910.1px">PERSON IN CHARGE</div>
<svg style="left:938px;top:912.1px" width="15" height="11" viewBox="0 0 15 11"><path d="M0 0H15V2H0zM3 4.5H12V6.5H3zM6 9H9V11H6z" fill="#2a2d22"/></svg>
<div class="hd" style="left:963px;top:910.1px">ASSIGN DATE</div>
<svg style="left:1083px;top:912.1px" width="15" height="11" viewBox="0 0 15 11"><path d="M0 0H15V2H0zM3 4.5H12V6.5H3zM6 9H9V11H6z" fill="#2a2d22"/></svg>
<div class="hd" style="left:1108px;top:910.1px">DUE DATE</div>
<svg style="left:1202px;top:912.1px" width="15" height="11" viewBox="0 0 15 11"><path d="M0 0H15V2H0zM3 4.5H12V6.5H3zM6 9H9V11H6z" fill="#2a2d22"/></svg>
<div class="hd" style="left:1227px;top:910.1px">DAYS LEFT</div>
<svg style="left:1333px;top:912.1px" width="15" height="11" viewBox="0 0 15 11"><path d="M0 0H15V2H0zM3 4.5H12V6.5H3zM6 9H9V11H6z" fill="#2a2d22"/></svg>
<div class="hd" style="left:1358px;top:910.1px">STATUS</div>
<svg style="left:1449px;top:912.1px" width="15" height="11" viewBox="0 0 15 11"><path d="M0 0H15V2H0zM3 4.5H12V6.5H3zM6 9H9V11H6z" fill="#2a2d22"/></svg>
<div class="hd" style="left:1474px;top:910.1px">NOTES</div>
<svg style="left:1869px;top:912.1px" width="15" height="11" viewBox="0 0 15 11"><path d="M0 0H15V2H0zM3 4.5H12V6.5H3zM6 9H9V11H6z" fill="#2a2d22"/></svg>
<div class="a" style="left:124px;top:929.9px;width:1766px;height:25.8px;background:#fff"></div>
<svg style="left:324px;top:940.4px" width="9" height="5" viewBox="0 0 9 5"><path d="M0 0H9L4.5 5z" fill="#666a66"/></svg>
<svg style="left:743px;top:940.4px" width="9" height="5" viewBox="0 0 9 5"><path d="M0 0H9L4.5 5z" fill="#666a66"/></svg>
<svg style="left:1452px;top:940.4px" width="9" height="5" viewBox="0 0 9 5"><path d="M0 0H9L4.5 5z" fill="#666a66"/></svg>
<div class="c" style="left:127.7px;top:935.1px">Project A</div>
<div class="c" style="left:345.7px;top:935.1px">Organize a meeting to kick off the project</div>
<div class="c" style="left:645.7px;top:935.1px">Medium</div>
<div class="c" style="left:764.7px;top:935.1px">Emma</div>
<div class="c" style="right:847px;top:935.1px">20 Apr 2022</div>
<div class="c" style="right:728px;top:935.1px">10 May 2022</div>
<div class="c" style="right:597px;top:935.1px">1</div>
<div class="c" style="left:1357.7px;top:935.1px">In Progress</div>
<div class="a" style="left:124px;top:955.7px;width:1766px;height:25.8px;background:#b9c3b9"></div>
<svg style="left:324px;top:966.2px" width="9" height="5" viewBox="0 0 9 5"><path d="M0 0H9L4.5 5z" fill="#666a66"/></svg>
<svg style="left:743px;top:966.2px" width="9" height="5" viewBox="0 0 9 5"><path d="M0 0H9L4.5 5z" fill="#666a66"/></svg>
<svg style="left:1452px;top:966.2px" width="9" height="5" viewBox="0 0 9 5"><path d="M0 0H9L4.5 5z" fill="#666a66"/></svg>
<div class="c" style="left:127.7px;top:960.9px">Project A</div>
<div class="c" style="left:345.7px;top:960.9px">Kick off Project</div>
<div class="c" style="left:645.7px;top:960.9px">High</div>
<div class="c" style="left:764.7px;top:960.9px">Ava</div>
<div class="c" style="right:847px;top:960.9px">22 Apr 2022</div>
<div class="c" style="right:728px;top:960.9px">12 May 2022</div>
<div class="c" style="right:597px;top:960.9px">3</div>
<div class="c" style="left:1357.7px;top:960.9px">In Progress</div>
<div class="a" style="left:124px;top:981.5px;width:1766px;height:25.8px;background:#fff"></div>
<svg style="left:324px;top:992.0px" width="9" height="5" viewBox="0 0 9 5"><path d="M0 0H9L4.5 5z" fill="#666a66"/></svg>
<svg style="left:743px;top:992.0px" width="9" height="5" viewBox="0 0 9 5"><path d="M0 0H9L4.5 5z" fill="#666a66"/></svg>
<svg style="left:1452px;top:992.0px" width="9" height="5" viewBox="0 0 9 5"><path d="M0 0H9L4.5 5z" fill="#666a66"/></svg>
<div class="c" style="left:127.7px;top:986.7px">Project C</div>
<div class="c" style="left:345.7px;top:986.7px">Revise User Manual Document</div>
<div class="c" style="left:645.7px;top:986.7px">Low</div>
<div class="c" style="left:764.7px;top:986.7px">James</div>
<div class="c" style="right:847px;top:986.7px">22 Apr 2022</div>
<div class="c" style="right:728px;top:986.7px">5 May 2022</div>
<div class="c" style="right:597px;top:986.7px">-4</div>
<div class="c" style="left:1357.7px;top:986.7px">Done</div>
<div class="a" style="left:124px;top:1007.4px;width:1766px;height:25.8px;background:#b9c3b9"></div>
<svg style="left:324px;top:1017.9px" width="9" height="5" viewBox="0 0 9 5"><path d="M0 0H9L4.5 5z" fill="#666a66"/></svg>
<svg style="left:743px;top:1017.9px" width="9" height="5" viewBox="0 0 9 5"><path d="M0 0H9L4.5 5z" fill="#666a66"/></svg>
<svg style="left:1452px;top:1017.9px" width="9" height="5" viewBox="0 0 9 5"><path d="M0 0H9L4.5 5z" fill="#666a66"/></svg>
<div class="c" style="left:127.7px;top:1012.6px">Project D</div>
<div class="c" style="left:345.7px;top:1012.6px">Develop Test Script</div>
<div class="c" style="left:645.7px;top:1012.6px">High</div>
<div class="c" style="left:764.7px;top:1012.6px">Oliver</div>
<div class="c" style="right:847px;top:1012.6px">22 Apr 2022</div>
<div class="c" style="right:728px;top:1012.6px">5 May 2022</div>
<div class="c" style="right:597px;top:1012.6px">-4</div>
<div class="c" style="left:1357.7px;top:1012.6px">On Hold</div>
<div class="a" style="left:124px;top:1033.2px;width:1766px;height:25.8px;background:#fff"></div>
<svg style="left:324px;top:1043.7px" width="9" height="5" viewBox="0 0 9 5"><path d="M0 0H9L4.5 5z" fill="#666a66"/></svg>
<svg style="left:743px;top:1043.7px" width="9" height="5" viewBox="0 0 9 5"><path d="M0 0H9L4.5 5z" fill="#666a66"/></svg>
<svg style="left:1452px;top:1043.7px" width="9" height="5" viewBox="0 0 9 5"><path d="M0 0H9L4.5 5z" fill="#666a66"/></svg>
<div class="c" style="left:127.7px;top:1038.4px">Project B</div>
<div class="c" style="left:345.7px;top:1038.4px">Organize a meeting to kick off the project</div>
<div class="c" style="left:645.7px;top:1038.4px">Medium</div>
<div class="c" style="left:764.7px;top:1038.4px">Sophia</div>
<div class="c" style="right:847px;top:1038.4px">23 Apr 2022</div>
<div class="c" style="right:728px;top:1038.4px">23 May 2022</div>
<div class="c" style="right:597px;top:1038.4px">14</div>
<div class="c" style="left:1357.7px;top:1038.4px">Not Started</div>
<div class="a" style="left:124px;top:1059.0px;width:1766px;height:25.8px;background:#b9c3b9"></div>
<svg style="left:324px;top:1069.5px" width="9" height="5" viewBox="0 0 9 5"><path d="M0 0H9L4.5 5z" fill="#666a66"/></svg>
<svg style="left:743px;top:1069.5px" width="9" height="5" viewBox="0 0 9 5"><path d="M0 0H9L4.5 5z" fill="#666a66"/></svg>
<svg style="left:1452px;top:1069.5px" width="9" height="5" viewBox="0 0 9 5"><path d="M0 0H9L4.5 5z" fill="#666a66"/></svg>
<div class="c" style="left:127.7px;top:1064.2px">Project A</div>
<div class="c" style="left:345.7px;top:1064.2px">Get Requirement</div>
<div class="c" style="left:645.7px;top:1064.2px">High</div>
<div class="c" style="left:764.7px;top:1064.2px">Emma</div>
<div class="c" style="right:847px;top:1064.2px">24 Apr 2022</div>
<div class="c" style="right:728px;top:1064.2px">14 May 2022</div>
<div class="c" style="right:597px;top:1064.2px">5</div>
<div class="c" style="left:1357.7px;top:1064.2px">Not Started</div>
<div class="a" style="left:124px;top:1084.8px;width:1766px;height:25.8px;background:#fff"></div>
<svg style="left:324px;top:1095.3px" width="9" height="5" viewBox="0 0 9 5"><path d="M0 0H9L4.5 5z" fill="#666a66"/></svg>
<svg style="left:743px;top:1095.3px" width="9" height="5" viewBox="0 0 9 5"><path d="M0 0H9L4.5 5z" fill="#666a66"/></svg>
<svg style="left:1452px;top:1095.3px" width="9" height="5" viewBox="0 0 9 5"><path d="M0 0H9L4.5 5z" fill="#666a66"/></svg>
<div class="c" style="left:127.7px;top:1090.0px">Project D</div>
<div class="c" style="left:345.7px;top:1090.0px">Develop User Manual Document</div>
<div class="c" style="left:645.7px;top:1090.0px">Low</div>
<div class="c" style="left:764.7px;top:1090.0px">Oliver</div>
<div class="c" style="right:847px;top:1090.0px">26 Apr 2022</div>
<div class="c" style="right:728px;top:1090.0px">5 May 2022</div>
<div class="c" style="right:597px;top:1090.0px">-4</div>
<div class="c" style="left:1357.7px;top:1090.0px">Not Started</div>
<div class="a" style="left:124px;top:1110.6px;width:1766px;height:25.8px;background:#b9c3b9"></div>
<svg style="left:324px;top:1121.1px" width="9" height="5" viewBox="0 0 9 5"><path d="M0 0H9L4.5 5z" fill="#666a66"/></svg>
<svg style="left:743px;top:1121.1px" width="9" height="5" viewBox="0 0 9 5"><path d="M0 0H9L4.5 5z" fill="#666a66"/></svg>
<svg style="left:1452px;top:1121.1px" width="9" height="5" viewBox="0 0 9 5"><path d="M0 0H9L4.5 5z" fill="#666a66"/></svg>
<div class="c" style="left:127.7px;top:1115.8px">Project A</div>
<div class="c" style="left:345.7px;top:1115.8px">Develop Test Script</div>
<div class="c" style="left:645.7px;top:1115.8px">High</div>
<div class="c" style="left:764.7px;top:1115.8px">Emma</div>
<div class="c" style="right:847px;top:1115.8px">28 Apr 2022</div>
<div class="c" style="right:728px;top:1115.8px">31 May 2022</div>
<div class="c" style="right:597px;top:1115.8px">22</div>
<div class="c" style="left:1357.7px;top:1115.8px">Not Started</div>
<div class="a" style="left:124px;top:1136.5px;width:1766px;height:25.8px;background:#fff"></div>
<svg style="left:324px;top:1147.0px" width="9" height="5" viewBox="0 0 9 5"><path d="M0 0H9L4.5 5z" fill="#666a66"/></svg>
<svg style="left:743px;top:1147.0px" width="9" height="5" viewBox="0 0 9 5"><path d="M0 0H9L4.5 5z" fill="#666a66"/></svg>
<svg style="left:1452px;top:1147.0px" width="9" height="5" viewBox="0 0 9 5"><path d="M0 0H9L4.5 5z" fill="#666a66"/></svg>
<div class="c" style="left:127.7px;top:1141.7px">Project B</div>
<div class="c" style="left:345.7px;top:1141.7px">Kick off Project</div>
<div class="c" style="left:645.7px;top:1141.7px">High</div>
<div class="c" style="left:764.7px;top:1141.7px">Ava</div>
<div class="c" style="right:847px;top:1141.7px">30 Apr 2022</div>
<div class="c" style="right:728px;top:1141.7px">25 May 2022</div>
<div class="c" style="right:597px;top:1141.7px">16</div>
<div class="c" style="left:1357.7px;top:1141.7px">Not Started</div>
<div class="a" style="left:124px;top:1162.3px;width:1766px;height:25.8px;background:#b9c3b9"></div>
<svg style="left:324px;top:1172.8px" width="9" height="5" viewBox="0 0 9 5"><path d="M0 0H9L4.5 5z" fill="#666a66"/></svg>
<svg style="left:743px;top:1172.8px" width="9" height="5" viewBox="0 0 9 5"><path d="M0 0H9L4.5 5z" fill="#666a66"/></svg>
<svg style="left:1452px;top:1172.8px" width="9" height="5" viewBox="0 0 9 5"><path d="M0 0H9L4.5 5z" fill="#666a66"/></svg>
<div class="a" style="left:124px;top:1188.1px;width:1766px;height:25.8px;background:#fff"></div>
<svg style="left:324px;top:1198.6px" width="9" height="5" viewBox="0 0 9 5"><path d="M0 0H9L4.5 5z" fill="#666a66"/></svg>
<svg style="left:743px;top:1198.6px" width="9" height="5" viewBox="0 0 9 5"><path d="M0 0H9L4.5 5z" fill="#666a66"/></svg>
<svg style="left:1452px;top:1198.6px" width="9" height="5" viewBox="0 0 9 5"><path d="M0 0H9L4.5 5z" fill="#666a66"/></svg>
<div class="a" style="left:124px;top:1213.9px;width:1766px;height:25.8px;background:#b9c3b9"></div>
<svg style="left:324px;top:1224.4px" width="9" height="5" viewBox="0 0 9 5"><path d="M0 0H9L4.5 5z" fill="#666a66"/></svg>
<svg style="left:743px;top:1224.4px" width="9" height="5" viewBox="0 0 9 5"><path d="M0 0H9L4.5 5z" fill="#666a66"/></svg>
<svg style="left:1452px;top:1224.4px" width="9" height="5" viewBox="0 0 9 5"><path d="M0 0H9L4.5 5z" fill="#666a66"/></svg>
<div class="a" style="left:124px;top:1239.7px;width:1766px;height:25.8px;background:#fff"></div>
<svg style="left:324px;top:1250.2px" width="9" height="5" viewBox="0 0 9 5"><path d="M0 0H9L4.5 5z" fill="#666a66"/></svg>
<svg style="left:743px;top:1250.2px" width="9" height="5" viewBox="0 0 9 5"><path d="M0 0H9L4.5 5z" fill="#666a66"/></svg>
<svg style="left:1452px;top:1250.2px" width="9" height="5" viewBox="0 0 9 5"><path d="M0 0H9L4.5 5z" fill="#666a66"/></svg>
<div class="a" style="left:124px;top:1265.6px;width:1766px;height:25.8px;background:#b9c3b9"></div>
<svg style="left:324px;top:1276.1px" width="9" height="5" viewBox="0 0 9 5"><path d="M0 0H9L4.5 5z" fill="#666a66"/></svg>
<svg style="left:743px;top:1276.1px" width="9" height="5" viewBox="0 0 9 5"><path d="M0 0H9L4.5 5z" fill="#666a66"/></svg>
<svg style="left:1452px;top:1276.1px" width="9" height="5" viewBox="0 0 9 5"><path d="M0 0H9L4.5 5z" fill="#666a66"/></svg>
<div class="a" style="left:124px;top:1291.4px;width:1766px;height:25.8px;background:#fff"></div>
<svg style="left:324px;top:1301.9px" width="9" height="5" viewBox="0 0 9 5"><path d="M0 0H9L4.5 5z" fill="#666a66"/></svg>
<svg style="left:743px;top:1301.9px" width="9" height="5" viewBox="0 0 9 5"><path d="M0 0H9L4.5 5z" fill="#666a66"/></svg>
<svg style="left:1452px;top:1301.9px" width="9" height="5" viewBox="0 0 9 5"><path d="M0 0H9L4.5 5z" fill="#666a66"/></svg>
<div class="a" style="left:124px;top:1317.2px;width:1766px;height:25.8px;background:#b9c3b9"></div>
<svg style="left:324px;top:1327.7px" width="9" height="5" viewBox="0 0 9 5"><path d="M0 0H9L4.5 5z" fill="#666a66"/></svg>
<svg style="left:743px;top:1327.7px" width="9" height="5" viewBox="0 0 9 5"><path d="M0 0H9L4.5 5z" fill="#666a66"/></svg>
<svg style="left:1452px;top:1327.7px" width="9" height="5" viewBox="0 0 9 5"><path d="M0 0H9L4.5 5z" fill="#666a66"/></svg>
<div class="a" style="left:124px;top:1343.0px;width:1766px;height:25.8px;background:#fff"></div>
<svg style="left:324px;top:1353.5px" width="9" height="5" viewBox="0 0 9 5"><path d="M0 0H9L4.5 5z" fill="#666a66"/></svg>
<svg style="left:743px;top:1353.5px" width="9" height="5" viewBox="0 0 9 5"><path d="M0 0H9L4.5 5z" fill="#666a66"/></svg>
<svg style="left:1452px;top:1353.5px" width="9" height="5" viewBox="0 0 9 5"><path d="M0 0H9L4.5 5z" fill="#666a66"/></svg>
<div class="a" style="left:124px;top:1368.8px;width:1766px;height:25.8px;background:#b9c3b9"></div>
<svg style="left:324px;top:1379.3px" width="9" height="5" viewBox="0 0 9 5"><path d="M0 0H9L4.5 5z" fill="#666a66"/></svg>
<svg style="left:743px;top:1379.3px" width="9" height="5" viewBox="0 0 9 5"><path d="M0 0H9L4.5 5z" fill="#666a66"/></svg>
<svg style="left:1452px;top:1379.3px" width="9" height="5" viewBox="0 0 9 5"><path d="M0 0H9L4.5 5z" fill="#666a66"/></svg>
<div class="a" style="left:124px;top:1394.7px;width:1766px;height:25.8px;background:#fff"></div>
<svg style="left:324px;top:1405.2px" width="9" height="5" viewBox="0 0 9 5"><path d="M0 0H9L4.5 5z" fill="#666a66"/></svg>
<svg style="left:743px;top:1405.2px" width="9" height="5" viewBox="0 0 9 5"><path d="M0 0H9L4.5 5z" fill="#666a66"/></svg>
<svg style="left:1452px;top:1405.2px" width="9" height="5" viewBox="0 0 9 5"><path d="M0 0H9L4.5 5z" fill="#666a66"/></svg>
<div class="a" style="left:124px;top:1420.5px;width:1766px;height:11.5px;background:#b9c3b9"></div>
<div class="a" style="left:341px;top:904.1px;width:1px;height:527.9px;background:#d4d6d4"></div>
<div class="a" style="left:641px;top:904.1px;width:1px;height:527.9px;background:#d4d6d4"></div>
<div class="a" style="left:760px;top:904.1px;width:1px;height:527.9px;background:#d4d6d4"></div>
<div class="a" style="left:958px;top:904.1px;width:1px;height:527.9px;background:#d4d6d4"></div>
<div class="a" style="left:1103px;top:904.1px;width:1px;height:527.9px;background:#d4d6d4"></div>
<div class="a" style="left:1222px;top:904.1px;width:1px;height:527.9px;background:#d4d6d4"></div>
<div class="a" style="left:1353px;top:904.1px;width:1px;height:527.9px;background:#d4d6d4"></div>
<div class="a" style="left:1469px;top:904.1px;width:1px;height:527.9px;background:#d4d6d4"></div>
<div class="a" style="left:123.2px;top:903.3px;width:1767.6px;height:530.9px;border:1.8px solid #4b8560;border-bottom:none;clip-path:inset(0 0 3px 0)"></div>
<div class="a" style="left:37px;top:1432px;width:1872px;height:15px;background:#fff;border-top:1px solid #e3e3e3"></div>
<div class="a" style="left:37px;top:1432px;width:57px;height:15px;background:#f8f9fa;border-right:1px solid #c9ccd0"></div>
<div class="a" style="left:95px;top:1434.500px;width:785px;height:9.500px;background:#dadce0;border-radius:5px"></div>
<div class="a" style="left:1856px;top:1432px;width:39px;height:15px;border-left:1px solid #e0e0e0"></div>
<div class="a" style="left:1875px;top:1432px;width:1px;height:15px;background:#e0e0e0"></div>
<svg style="left:1863px;top:1436px" width="4" height="7" viewBox="0 0 4 7"><path d="M4 0V7L0 3.500z" fill="#8a8d91"/></svg>
<svg style="left:1884px;top:1436px" width="4" height="7" viewBox="0 0 4 7"><path d="M0 0V7L4 3.500z" fill="#8a8d91"/></svg>
<div class="a" style="left:1895px;top:1392px;width:14px;height:40px;background:#fff;border-left:1px solid #e0e0e0;border-top:1px solid #e0e0e0"></div>
<div class="a" style="left:1895px;top:1411px;width:14px;height:1px;background:#e0e0e0"></div>
<svg style="left:1899px;top:1399px" width="7" height="4" viewBox="0 0 7 4"><path d="M0 4H7L3.500 0z" fill="#8a8d91"/></svg>
<svg style="left:1899px;top:1419px" width="7" height="4" viewBox="0 0 7 4"><path d="M0 0H7L3.500 4z" fill="#8a8d91"/></svg>
<div class="a" style="left:37px;top:1447px;width:1872px;height:46px;background:linear-gradient(#f1f3f4 0,#f1f3f4 70%,#e9ebec 100%);border-top:1px solid #e0e0e0"></div>
<svg style="left:94.500px;top:1458.500px" width="22" height="22" viewBox="0 0 24 24"><path d="M19 13h-6v6h-2v-6H5v-2h6V5h2v6h6v2z" fill="#444746"/></svg>
<svg style="left:133px;top:1458.500px" width="22" height="22" viewBox="0 0 24 24"><path d="M4 15h16v-2H4v2zm0 4h16v-2H4v2zm0-8h16V9H4v2zm0-6v2h16V5H4z" fill="#444746"/></svg>
<div class="t" style="left:200px;top:1460.500px;font-size:18px;color:#5f6368;letter-spacing:0.950px;-webkit-text-stroke:0.3px #5f6368">Instruction</div>
<svg style="left:304px;top:1468.0px" width="10" height="5" viewBox="0 0 10 5"><path d="M0 0H10L5 5z" fill="#80868b"/></svg>
<div class="t" style="left:354px;top:1460.500px;font-size:18px;color:#5f6368;letter-spacing:0.650px;-webkit-text-stroke:0.3px #5f6368">Master</div>
<svg style="left:424px;top:1468.0px" width="10" height="5" viewBox="0 0 10 5"><path d="M0 0H10L5 5z" fill="#80868b"/></svg>
<div class="a" style="left:454px;top:1447px;width:221px;height:46px;background:#fff;box-shadow:0 1px 3px rgba(60,64,67,.25)"></div>
<div class="t" style="left:474px;top:1460.500px;font-size:18px;color:#188038;letter-spacing:0.250px;-webkit-text-stroke:0.3px #188038">Employee Task List</div>
<svg style="left:645px;top:1468.0px" width="10" height="5" viewBox="0 0 10 5"><path d="M0 0H10L5 5z" fill="#188038"/></svg>
<div class="a" style="left:180px;top:1448px;width:1px;height:45px;background:#e3e4e6"></div><div class="a" style="left:334px;top:1448px;width:1px;height:45px;background:#e3e4e6"></div>
<svg style="left:1793px;top:1458.500px" width="23.500" height="26" viewBox="0 0 24 27"><path d="M3 0H21a3 3 0 0 1 3 3V20a3 3 0 0 1-3 3H15L12 26.500 9 23H3a3 3 0 0 1-3-3V3a3 3 0 0 1 3-3z" fill="#5f6368"/><path d="M12 3.500C12.800 8.500 14.500 10.700 19.500 11.500 14.500 12.300 12.800 14.500 12 19.500 11.200 14.500 9.500 12.300 4.500 11.500 9.500 10.700 11.200 8.500 12 3.500z" fill="#f1f3f4"/></svg>
<svg style="left:1863px;top:1459.500px" width="24" height="24" viewBox="0 0 24 24"><path d="M15.410 7.410L14 6l-6 6 6 6 1.410-1.410L10.830 12z" fill="#444746"/></svg>
</body></html>
